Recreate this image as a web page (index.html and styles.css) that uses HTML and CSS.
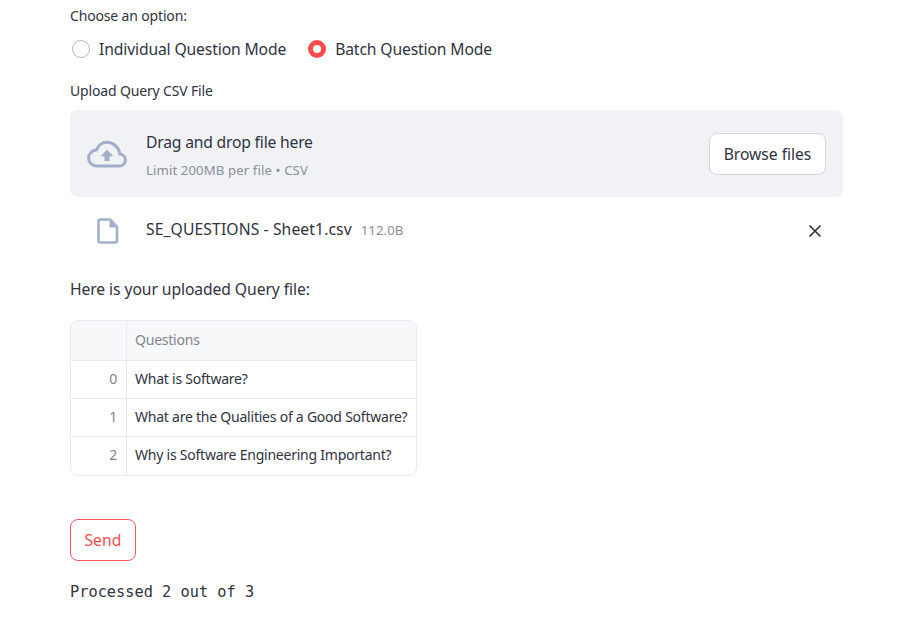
FILE: index.html
```html
<!DOCTYPE html>
<html lang="en">
<head>
<meta charset="utf-8">
<title>Batch Question Mode</title>
<link rel="stylesheet" href="styles.css">
</head>
<body>
<main class="page">
  <div class="label label-choose">Choose an option:</div>
  <div class="radios">
    <div class="radio"><span class="dot"></span><span>Individual Question Mode</span></div>
    <div class="radio"><span class="dot dot-on"></span><span>Batch Question Mode</span></div>
  </div>
  <div class="label label-upload">Upload Query CSV File</div>
  <section class="drop">
    <svg class="cloud" viewBox="0 0 40 28" width="40" height="28" aria-hidden="true">
      <path d="M20 2.2c-5 0-9 3.2-10.3 7.600C5 10.300 1.600 13.700 1.600 18c0 4.500 3.600 8 8.200 8h22.600c3.400 0 6-2.700 6-6 0-3.200-2.400-5.700-5.500-6C31.800 7.200 26.500 2.200 20 2.200z" fill="none" stroke="#a3afc9" stroke-width="3"/>
      <path d="M20 9.500l6.300 6.700h-3.800v4.800h-5v-4.800h-3.800z" fill="#a3afc9"/>
    </svg>
    <div class="drop-text">
      <div class="drop-title">Drag and drop file here</div>
      <div class="drop-limit">Limit 200MB per file • CSV</div>
    </div>
    <button class="browse">Browse files</button>
  </section>
  <div class="file">
    <svg class="doc" viewBox="0 0 22 26" width="22" height="26" aria-hidden="true">
      <path d="M3 1.500h10l7 7.500v13.500a2 2 0 0 1-2 2H3.500a2 2 0 0 1-2-2V3a1.500 1.500 0 0 1 1.500-1.500z" fill="none" stroke="#a3afc9" stroke-width="2.600" stroke-linejoin="round"/>
      <path d="M12.500 2v7.500H20z" fill="#a3afc9"/>
    </svg>
    <span class="file-name">SE_QUESTIONS - Sheet1.csv</span>
    <span class="file-size">112.0B</span>
    <svg class="close" viewBox="0 0 14 14" width="14" height="14" aria-hidden="true">
      <path d="M1.500 1.500l11 11M12.500 1.500l-11 11" stroke="#31333f" stroke-width="1.700" fill="none"/>
    </svg>
  </div>
  <p class="intro">Here is your uploaded Query file:</p>
  <div class="table">
    <div class="row row-head"><div class="idx"></div><div class="cell">Questions</div></div>
    <div class="row"><div class="idx">0</div><div class="cell">What is Software?</div></div>
    <div class="row"><div class="idx">1</div><div class="cell">What are the Qualities of a Good Software?</div></div>
    <div class="row"><div class="idx">2</div><div class="cell">Why is Software Engineering Important?</div></div>
  </div>
  <button class="send">Send</button>
  <div class="mono">Processed 2 out of 3</div>
</main>
</body>
</html>
```
FILE: styles.css
```css
* { box-sizing: border-box; }
html, body { margin: 0; background: #fff; }
body {
  font-family: "Noto Sans", "Liberation Sans", sans-serif;
  color: #31333f;
  overflow: hidden;
}
.page {
  width: 911px;
  height: 622px;
  padding: 6px 68px 0 70px;
  display: flex;
  flex-direction: column;
  align-items: stretch;
}
.label {
  font-size: 14px;
  line-height: 20px;
  letter-spacing: -0.16px;
}
.radios {
  display: flex;
  gap: 22px;
  margin-top: 13px;
  height: 20px;
  padding-left: 2px;
}
.radio {
  display: flex;
  align-items: center;
  gap: 9px;
  font-size: 15.7px;
  letter-spacing: -0.14px;
}
.dot {
  width: 18px;
  height: 18px;
  border-radius: 50%;
  border: 1px solid #b4b6bb;
  background: #fff;
  flex: none;
}
.dot-on {
  border: 5.5px solid #ff4b4b;
}
.label-upload { margin-top: 22px; }
.drop {
  margin-top: 9px;
  height: 87px;
  background: #f0f2f6;
  border-radius: 8px;
  display: flex;
  align-items: center;
  padding: 0 17px;
}
.cloud { flex: none; }
.drop-text { margin-left: 19px; padding-top: 4px; flex: 1; }
.drop-title {
  font-size: 15.7px;
  letter-spacing: -0.2px;
  line-height: 22px;
}
.drop-limit {
  font-size: 13.2px;
  letter-spacing: 0.1px;
  line-height: 20px;
  margin-top: 7px;
  color: #8d8f98;
}
.browse {
  width: 117px;
  height: 42px;
  background: #fff;
  border: 1px solid #d6d6d9;
  border-radius: 8px;
  color: #31333f;
  font: inherit;
  font-size: 15.7px;
  letter-spacing: -0.05px;
  padding: 0;
}
.file {
  display: flex;
  align-items: center;
  height: 26px;
  margin-top: 21px;
  padding-left: 27px;
}
.file .doc { flex: none; }
.file-name {
  margin: 0 0 4px 27px;
  font-size: 15.7px;
  letter-spacing: 0.1px;
}
.file-size {
  margin: 0 0 2px 9px;
  font-size: 13.2px;
  letter-spacing: 0.08px;
  color: #8d8f98;
}
.close { margin-left: auto; margin-right: 21px; flex: none; }
.intro {
  margin: 33px 0 0;
  font-size: 15.7px;
  letter-spacing: -0.09px;
  line-height: 24px;
}
.table {
  margin-top: 19px;
  width: 347px;
  border: 1px solid #e9eaed;
  border-radius: 8px;
  overflow: hidden;
  font-size: 14px;
  letter-spacing: -0.23px;
}
.row {
  display: flex;
  height: 38px;
  border-top: 1px solid #e9eaed;
}
.row:first-child { border-top: none; }
.row-head {
  height: 39px;
  background: #f7f8fa;
  color: #83858e;
}
.row:last-child { height: 39px; }
.idx {
  width: 56px;
  flex: none;
  border-right: 1px solid #e9eaed;
  text-align: right;
  padding-right: 9px;
  line-height: 36px;
  color: #83858e;
}
.cell {
  flex: 1;
  padding-left: 8px;
  line-height: 36px;
  white-space: nowrap;
}
.row-head .cell { line-height: 38px; }
.send {
  margin-top: 43px;
  width: 66px;
  height: 42px;
  background: #fff;
  border: 1px solid #ec5a5a;
  border-radius: 8px;
  color: #ef4f4f;
  font: inherit;
  font-size: 15.7px;
  letter-spacing: 0.1px;
  padding: 0;
}
.mono {
  margin-top: 21px;
  font-family: "DejaVu Sans Mono", "Liberation Mono", monospace;
  font-size: 15.3px;
  line-height: 20px;
  color: #31333f;
}
```
